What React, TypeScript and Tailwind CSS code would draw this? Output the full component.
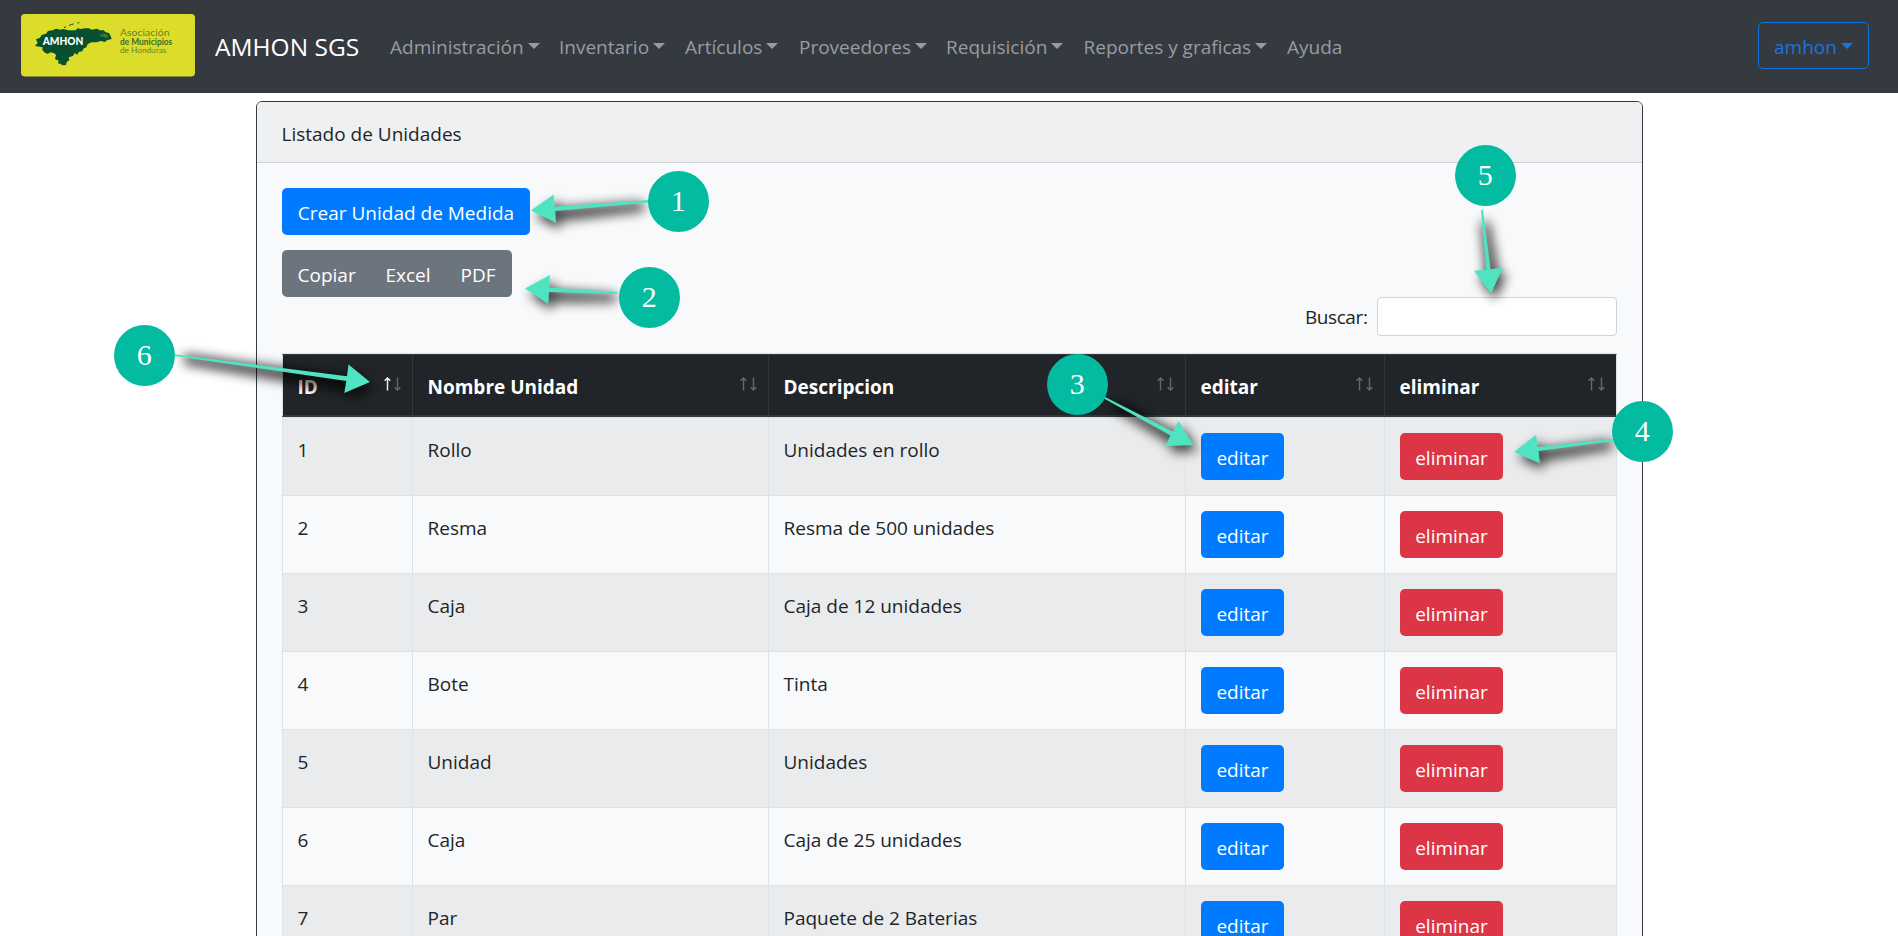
import React from "react";

const navItems = [
  { label: "Administración", caret: true, width: "w-[169px]" },
  { label: "Inventario", caret: true, width: "w-[126px]" },
  { label: "Artículos", caret: true, width: "w-[114px]" },
  { label: "Proveedores", caret: true, width: "w-[147px]" },
  { label: "Requisición", caret: true, width: "w-[137.5px]" },
  { label: "Reportes y graficas", caret: true, width: "w-[203.5px]" },
  { label: "Ayuda", caret: false, width: "w-[76px]" },
];

const rows = [
  ["1", "Rollo", "Unidades en rollo"],
  ["2", "Resma", "Resma de 500 unidades"],
  ["3", "Caja", "Caja de 12 unidades"],
  ["4", "Bote", "Tinta"],
  ["5", "Unidad", "Unidades"],
  ["6", "Caja", "Caja de 25 unidades"],
  ["7", "Par", "Paquete de 2 Baterias"],
];

const headers = ["ID", "Nombre Unidad", "Descripcion", "editar", "eliminar"];

const markers = [
  { n: "1", place: "left-[648px] top-[171px]" },
  { n: "2", place: "left-[619px] top-[267px]" },
  { n: "3", place: "left-[1047px] top-[354px]" },
  { n: "4", place: "left-[1612px] top-[401px]" },
  { n: "5", place: "left-[1455px] top-[145px]" },
  { n: "6", place: "left-[114px] top-[325px]" },
];

const arrows = [
  "531,210.5 553.7,194.5 554.7,206.8 649,200 649,202.5 555.3,211 556,223",
  "525,288.5 550,275 549.5,287.5 617,292 617,294 549,292 548.3,304",
  "370,382 348.5,364.5 347,376.3 174.5,354.3 174.5,356 346.3,381 344.3,393",
  "1193.5,445 1178.5,421 1173,431.5 1105,397 1104,398.5 1170.5,435.5 1165,446.3",
  "1514,452 1536,434.8 1537.7,447 1614,438.7 1614,441 1538.5,451 1540,463.5",
  "1491,293.5 1474,270.7 1486.3,269.7 1481,210 1483,210 1490.5,269.2 1503,267.5",
];

const shadows = [
  "531,210.5 553.7,194.5 555,202 640,196 640,205 555.3,215 556,223",
  "525,288.5 550,275 549.5,284 612,288 612,296 549,296 548.3,304",
  "370,382 348.5,364.5 347,371 180,348 180,358 346.3,386 344.3,393",
  "1193.5,445 1178.5,421 1174,427 1112,394 1108,402 1169.500,440 1165,446.3",
  "1514,452 1536,434.8 1537.7,443 1608,434 1608,443 1538.5,455 1540,463.5",
  "1491,293.5 1474,270.7 1482,269.7 1477,216 1485,216 1495,269.2 1503,267.5",
];

function Caret() {
  return (
    <svg viewBox="0 0 12 6" className="mb-px ml-[4px] h-[6px] w-[12px] shrink-0 fill-current">
      <path d="M0 0h12L6 6z" />
    </svg>
  );
}

function Logo() {
  return (
    <svg viewBox="0 0 174 63" className="mb-[2px] h-[63px] w-[174px] shrink-0">
      <rect width="174" height="62.500" rx="4" fill="#dcdd2a" />
      <g transform="translate(-21 -14) scale(0.33333)">
        <path
          d="M105 138l8-9-5-11 12-5 5-8 13-4 6-8 14-2 10-5 14 3 8-2 15 4 22 0 5-6 12 2 10-2 12 0 10 4 15-3 8 5 12 0 6 6 10 2 5 9 3 9-14 4-6 5-12-3-14 4-14 0-12 5 -4 10-9 4-3 8-10 1-5 9-8-5-5 9-13 4 2 9-8 5-2 9-12 1-3-5-8 0 0-12-7 1-3-6 4-9-8-6-10-2-8 5-10-5-6-8 1-7z"
          fill="#07502f"
        />
        <path d="M192 83l6-3M207 77q6-5 14-5M232 69l6-1" stroke="#07502f" strokeWidth="3" fill="none" />
        <path d="M300 105l22 7M308 101l16 7" stroke="#dcdd2a" strokeWidth="1.500" fill="none" />
        <text x="128" y="136" textLength="122" lengthAdjust="spacingAndGlyphs" fill="#fff" fontFamily="Lato, sans-serif" fontWeight="900" fontSize="33">
          AMHON
        </text>
        <g fill="#6b8324" fontFamily="Lato, sans-serif" fontSize="28">
          <text x="360" y="109" textLength="149" lengthAdjust="spacingAndGlyphs">
            Asociación
          </text>
          <text x="360" y="135" textLength="157" lengthAdjust="spacingAndGlyphs" fill="#3d6a25" fontWeight="700" fontSize="26">
            de Municipios
          </text>
          <text x="360" y="159" textLength="139" lengthAdjust="spacingAndGlyphs" fontSize="25">
            de Honduras
          </text>
        </g>
      </g>
    </svg>
  );
}

function SortIcon({ active }: { active: boolean }) {
  return (
    <svg viewBox="0 0 17 14" className="mb-[6px] h-[14px] w-[17px] shrink-0" fill="none" stroke="#fff" strokeWidth="1.400">
      <path d="M3.500 13.500V1.500M.7 3.800L3.500 1l2.800 2.800" opacity={active ? 0.95 : 0.3} />
      <path d="M13.500 .5v12M10.700 10.200l2.800 2.800 2.800-2.800" opacity="0.3" />
    </svg>
  );
}

export default function App() {
  return (
    <div className="relative h-[936px] w-[1898px] overflow-hidden bg-white font-['Open_Sans',sans-serif] text-[19px] leading-[30px] text-[#212529]">
      <nav className="flex h-[93px] items-center bg-[#343a40] pr-[29px] pl-[21px]">
        <Logo />
        <span className="ml-5 w-[155px] whitespace-nowrap text-[24.500px] text-white">AMHON SGS</span>
        <ul className="ml-[10px] flex text-[#999c9f]">
          {navItems.map((item) => (
            <li key={item.label} className={`flex items-center whitespace-nowrap px-[10px] ${item.width}`}>
              <span>{item.label}</span>
              {item.caret && <Caret />}
            </li>
          ))}
        </ul>
        <button className="mb-[2px] ml-auto flex h-[47px] w-[111px] items-center justify-center rounded-[5px] border border-[#0f74dc] pt-[2px] text-[#1a75dd]">
          <span>amhon</span>
          <Caret />
        </button>
      </nav>

      <main className="mx-auto mt-2 w-[1387px] overflow-hidden rounded-[6px] border border-[#343a40] bg-[#f8f9fa]">
        <header className="flex h-[61px] items-center border-b border-[#cfd1d4] bg-[#eff0f1] px-[25px] pt-[3px]">
          Listado de Unidades
        </header>
        <div className="px-[25px] pt-[25px]">
          <button className="flex h-[47px] w-[248px] items-center justify-center rounded-[5px] bg-[#007bff] pt-[2px] pl-px text-white">
            Crear Unidad de Medida
          </button>
          <div className="mt-[15px] flex h-[47px] w-[230px] items-center justify-between rounded-[5px] bg-[#6c757d] px-4 pt-[2px] text-white">
            <span>Copiar</span>
            <span>Excel</span>
            <span>PDF</span>
          </div>
          <label className="flex h-[39px] items-center justify-end gap-[9px]">
            <span className="tracking-[-0.4px]">Buscar:</span>
            <input className="h-[39px] w-[240px] rounded-[4px] border border-[#ced4da] bg-white" />
          </label>
          <table className="mt-[17px] w-[1335px] table-fixed border-separate border-spacing-0 border-t border-[#dee2e6]">
            <colgroup>
              <col className="w-[130px]" />
              <col className="w-[356px]" />
              <col className="w-[417px]" />
              <col className="w-[199px]" />
              <col className="w-[233px]" />
            </colgroup>
            <thead>
              <tr className="bg-[#212529] text-left text-white">
                {headers.map((h, i) => (
                  <th
                    key={h}
                    className="h-[63px] border-t border-b-2 border-l border-[#32383e] p-0 pr-[11px] pl-[15px] font-bold first:border-l-[#dee2e6] last:border-r last:border-r-[#dee2e6]"
                  >
                    <div className="flex items-center justify-between whitespace-nowrap pt-1">
                      <span>{h}</span>
                      <SortIcon active={i === 0} />
                    </div>
                  </th>
                ))}
              </tr>
            </thead>
            <tbody>
              {rows.map((r) => (
                <tr key={r[0]} className="odd:bg-[#eaebec]">
                  {r.map((c, i) => (
                    <td key={i} className="h-[78px] border-t border-l border-[#dee2e6] p-0 pt-[17px] pl-[15px] align-top">
                      {c}
                    </td>
                  ))}
                  <td className="h-[78px] border-t border-l border-[#dee2e6] p-0 pt-[15px] pl-[15px] align-top">
                    <button className="flex h-[47px] w-[83px] items-center justify-center rounded-[5px] bg-[#007bff] pt-[2px] pl-px text-white">
                      editar
                    </button>
                  </td>
                  <td className="h-[78px] border-x border-t border-[#dee2e6] p-0 pt-[15px] pl-[15px] align-top">
                    <button className="flex h-[47px] w-[103px] items-center justify-center rounded-[5px] bg-[#dc3545] pt-[2px] pl-px text-white">
                      eliminar
                    </button>
                  </td>
                </tr>
              ))}
            </tbody>
          </table>
        </div>
      </main>

      <svg viewBox="0 0 1898 936" className="pointer-events-none absolute inset-0 h-[936px] w-[1898px]">
        <g className="translate-x-[4px] translate-y-[6px] opacity-75 blur-[6px]">
          {shadows.map((points) => (
            <polygon key={points} points={points} fill="#000" />
          ))}
        </g>
        {arrows.map((points) => (
          <polygon key={points} points={points} fill="#50e3c2" />
        ))}
      </svg>
      {markers.map((m) => (
        <div
          key={m.n}
          className={`absolute flex size-[60.5px] items-center justify-center rounded-full bg-[#02bba1] pb-px font-['Liberation_Serif',serif] text-[30px] text-white ${m.place}`}
        >
          {m.n}
        </div>
      ))}
    </div>
  );
}
